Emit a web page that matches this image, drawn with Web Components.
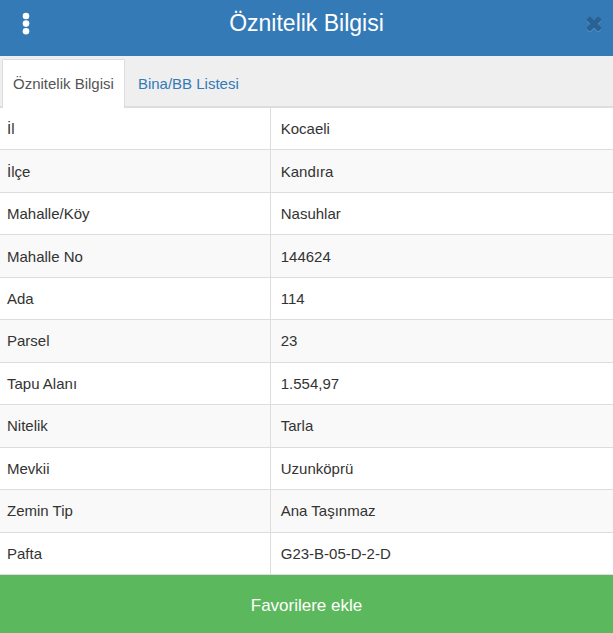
<!DOCTYPE html>
<html lang="tr">
<head>
  <meta charset="UTF-8">
  <meta name="viewport" content="width=device-width, initial-scale=1.0">
  <title>Öznitelik Bilgisi</title>
  <style>
    body {
      margin: 0;
      font-family: "Liberation Sans", Arial, sans-serif;
      font-size: 15px;
      line-height: 20px;
      color: #333;
      background: #fff;
    }
  </style>
</head>
<body>
  <parcel-panel></parcel-panel>

  <script>
    const PARCEL = [
      ["İl", "Kocaeli"],
      ["İlçe", "Kandıra"],
      ["Mahalle/Köy", "Nasuhlar"],
      ["Mahalle No", "144624"],
      ["Ada", "114"],
      ["Parsel", "23"],
      ["Tapu Alanı", "1.554,97"],
      ["Nitelik", "Tarla"],
      ["Mevkii", "Uzunköprü"],
      ["Zemin Tip", "Ana Taşınmaz"],
      ["Pafta", "G23-B-05-D-2-D"]
    ];

    class PanelHeader extends HTMLElement {
      constructor() {
        super();
        this.attachShadow({ mode: "open" });
      }

      static get styles() {
        return /* css */`
          :host {
            display: grid;
            grid-template-columns: 52px 1fr 52px;
            align-items: start;
            height: 56px;
            background: #337ab7;
            color: #fff;
          }

          h1 {
            margin: 0;
            padding-top: 8px;
            font-size: 23px;
            font-weight: normal;
            line-height: 30px;
            text-align: center;
          }

          button {
            display: flex;
            justify-content: center;
            align-items: center;
            height: 47px;
            padding: 0;
            border: 0;
            background: none;
            cursor: pointer;
          }

          .close {
            justify-content: flex-end;
            padding-right: 10px;
          }

          svg {
            display: block;
          }
        `;
      }

      connectedCallback() {
        this.render();
      }

      render() {
        this.shadowRoot.innerHTML = /* html */`
        <style>${PanelHeader.styles}</style>
        <button type="button" aria-label="Menü">
          <svg width="8" height="24" viewBox="0 0 8 24" fill="#fff">
            <circle cx="4" cy="4" r="3.3"/>
            <circle cx="4" cy="11.6" r="3.3"/>
            <circle cx="4" cy="19.2" r="3.3"/>
          </svg>
        </button>
        <h1><slot></slot></h1>
        <button class="close" type="button" aria-label="Kapat">
          <svg width="18" height="18" viewBox="0 0 18 18" stroke-width="2" stroke-linejoin="round">
            <path d="M4.8 3.6L9 7.8l4.2-4.2 2.2 2.2L11.2 10l4.2 4.2-2.2 2.2L9 12.2l-4.2 4.2-2.2-2.2L6.8 10 2.6 5.8z" fill="#5c93c5" stroke="#5c93c5"/>
            <path d="M4.8 2.6L9 6.8l4.2-4.2 2.2 2.2L11.2 9l4.2 4.2-2.2 2.2L9 11.2l-4.2 4.2-2.2-2.2L6.8 9 2.6 4.8z" fill="#296292" stroke="#296292"/>
          </svg>
        </button>`;
      }
    }

    class PanelTabs extends HTMLElement {
      constructor() {
        super();
        this.attachShadow({ mode: "open" });
      }

      static get styles() {
        return /* css */`
          :host {
            display: block;
            background: #efefef;
          }

          nav {
            display: flex;
            gap: 2px;
            padding: 3px 2px 0;
            border-bottom: 2px solid #ddd;
          }
        `;
      }

      connectedCallback() {
        this.shadowRoot.innerHTML = /* html */`
        <style>${PanelTabs.styles}</style>
        <nav><slot></slot></nav>`;
      }
    }

    class PanelTab extends HTMLElement {
      constructor() {
        super();
        this.attachShadow({ mode: "open" });
      }

      static get styles() {
        return /* css */`
          :host {
            display: block;
            margin-bottom: -2px;
          }

          a {
            display: block;
            padding: 14px 10px;
            border: 1px solid transparent;
            border-bottom: 0;
            border-radius: 2px 2px 0 0;
            color: #337ab7;
            text-decoration: none;
          }

          :host([active]) a {
            border-color: #ddd;
            background: #fff;
            color: #555;
          }
        `;
      }

      connectedCallback() {
        const current = this.hasAttribute("active") ? `aria-current="page"` : "";
        this.shadowRoot.innerHTML = /* html */`
        <style>${PanelTab.styles}</style>
        <a href="#" ${current}><slot></slot></a>`;
      }
    }

    class AttributeTable extends HTMLElement {
      constructor() {
        super();
        this.attachShadow({ mode: "open" });
      }

      static get styles() {
        return /* css */`
          :host {
            display: grid;
          }

          table {
            width: 100%;
            height: 100%;
            border-spacing: 0;
            table-layout: fixed;
          }

          .name {
            width: 44%;
          }

          th, td {
            padding: 11px 10px 10px 7px;
            border-bottom: 1px solid #ddd;
            font-weight: normal;
            text-align: left;
          }

          td {
            padding-left: 10px;
            border-left: 1px solid #ddd;
          }

          tr:nth-child(even) {
            background: #f9f9f9;
          }
        `;
      }

      connectedCallback() {
        this.render();
      }

      render() {
        const rows = PARCEL.map(([name, value]) => `<tr><th scope="row">${name}</th><td>${value}</td></tr>`);
        this.shadowRoot.innerHTML = /* html */`
        <style>${AttributeTable.styles}</style>
        <table>
          <colgroup><col class="name"><col></colgroup>
          <tbody>${rows.join("")}</tbody>
        </table>`;
      }
    }

    class FavoriteButton extends HTMLElement {
      constructor() {
        super();
        this.attachShadow({ mode: "open" });
      }

      static get styles() {
        return /* css */`
          :host {
            display: block;
          }

          button {
            display: block;
            width: 100%;
            padding: 21px 16px 17px;
            border: 0;
            background: #5cb85c;
            color: #fff;
            font: inherit;
            font-size: 17px;
            line-height: 20px;
            cursor: pointer;
          }
        `;
      }

      connectedCallback() {
        this.shadowRoot.innerHTML = /* html */`
        <style>${FavoriteButton.styles}</style>
        <button type="button"><slot></slot></button>`;
      }
    }

    class ParcelPanel extends HTMLElement {
      constructor() {
        super();
        this.attachShadow({ mode: "open" });
      }

      static get styles() {
        return /* css */`
          :host {
            display: flex;
            flex-direction: column;
            min-height: 100vh;
          }

          attribute-table {
            flex: 1;
          }
        `;
      }

      connectedCallback() {
        this.render();
      }

      render() {
        this.shadowRoot.innerHTML = /* html */`
        <style>${ParcelPanel.styles}</style>
        <panel-header>Öznitelik Bilgisi</panel-header>
        <panel-tabs>
          <panel-tab active>Öznitelik Bilgisi</panel-tab>
          <panel-tab>Bina/BB Listesi</panel-tab>
        </panel-tabs>
        <attribute-table></attribute-table>
        <favorite-button>Favorilere ekle</favorite-button>`;
      }
    }

    customElements.define("panel-header", PanelHeader);
    customElements.define("panel-tabs", PanelTabs);
    customElements.define("panel-tab", PanelTab);
    customElements.define("attribute-table", AttributeTable);
    customElements.define("favorite-button", FavoriteButton);
    customElements.define("parcel-panel", ParcelPanel);
  </script>
</body>
</html>
